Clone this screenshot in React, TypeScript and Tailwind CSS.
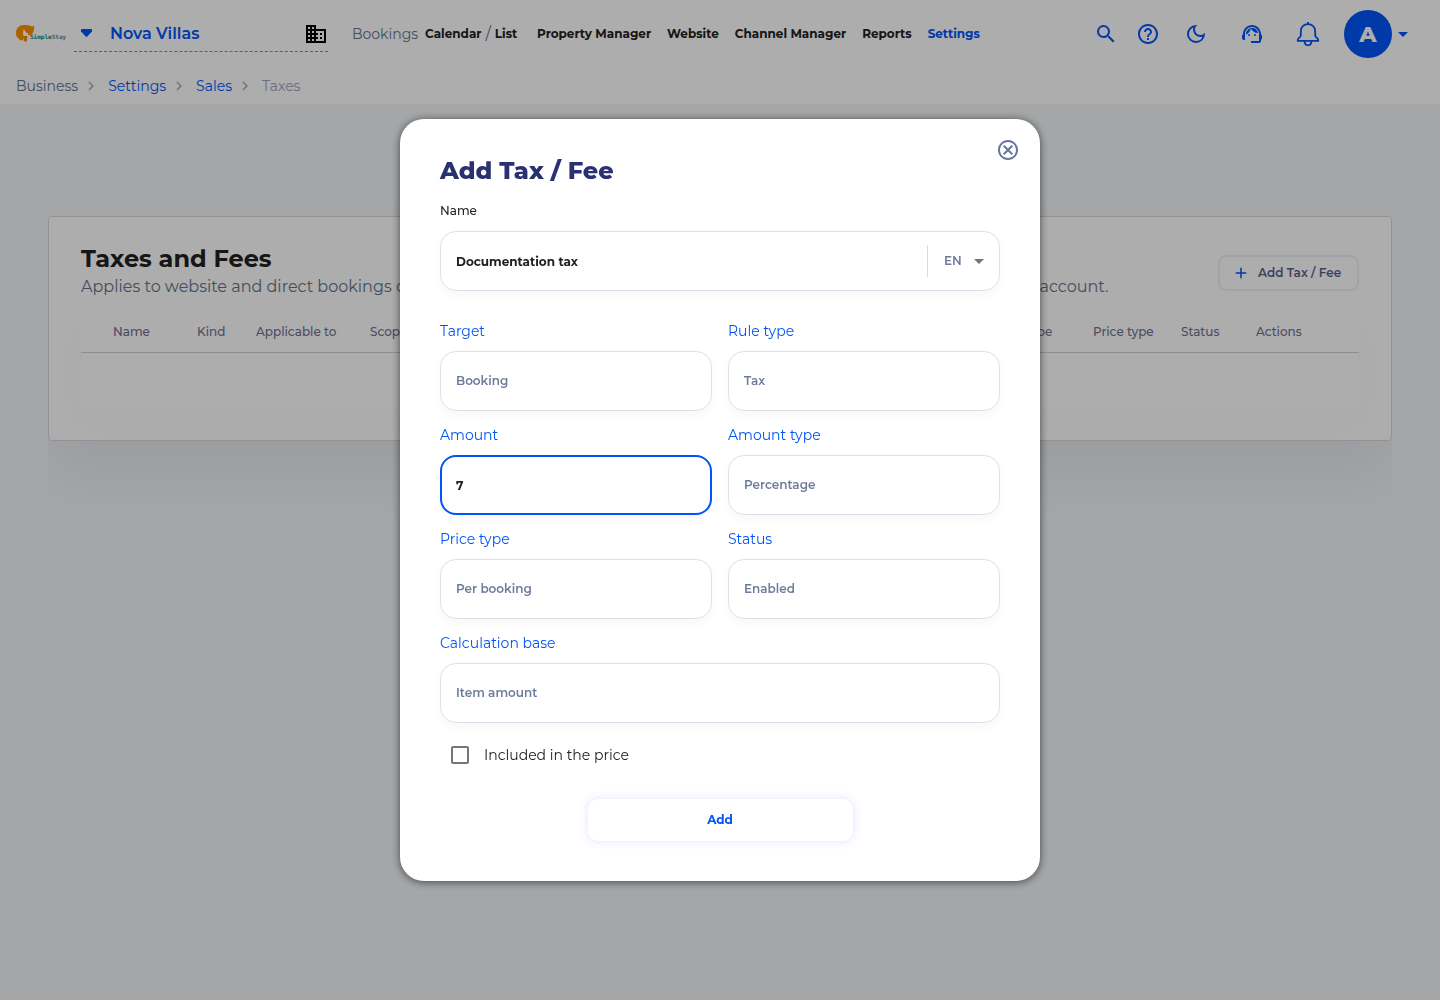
import { useState } from 'react'
import type { ReactNode } from 'react'
import {
  MdAdd,
  MdArrowDropDown,
  MdBusiness,
  MdChevronRight,
  MdHelpOutline,
  MdOutlineCancel,
  MdOutlineDarkMode,
  MdSearch,
  MdSupportAgent,
} from 'react-icons/md'

const navLinks = ['Property Manager', 'Website', 'Channel Manager', 'Reports']

const columns = [
  { title: 'Name', width: 'w-[84px]' },
  { title: 'Kind', width: 'w-[59px]' },
  { title: 'Applicable to', width: 'w-[114px]' },
  { title: 'Scope', width: 'w-[300px]' },
  { title: 'Amount', width: '' },
  { title: 'Amount type', width: 'w-[121px]' },
  { title: 'Price type', width: 'w-[88px]' },
  { title: 'Status', width: 'w-[75px]' },
  { title: 'Actions', width: 'w-[103px]' },
]

const fieldClass =
  'block w-full h-[60px] appearance-none rounded-2xl border border-[#dfdfeb] bg-white px-[15px] text-xs shadow-[0_4px_10px_rgba(20,20,43,0.03)] outline-none'

function Logo() {
  return (
    <svg width="50" height="20" viewBox="0 0 50 20" role="img" aria-label="SimpleStay">
      <path
        d="M8 1C3.300 1 0 4.300 0 8.800c0 4.600 3 7.700 7 7.700L8.200 13C6.800 11 6.600 8 7.800 5l2 3.200c1.800.4 2.400 1.600 2.400 3h2.900c2-2.200 3.600-5 2.900-9.700-1.300 1-2 1-3.200.6C13.200 1.200 11 1 8 1Z"
        fill="#ff9100"
      />
      <path d="M7.500 12h4l-.6 2.500.4 1.700-1.700 1.800-1.900-1.800.5-1.700Z" fill="#f08a00" />
      <text x="14" y="15" fontSize="6" fontWeight="700" fontFamily="DejaVu Sans Mono, monospace">
        <tspan fill="#138a78">Simple</tspan>
        <tspan fill="#6688a8">Stay</tspan>
      </text>
    </svg>
  )
}

function BellIcon() {
  return (
    <svg width="24" height="26" viewBox="0 0 24 26" fill="none" stroke="currentColor" strokeWidth="1.800">
      <path d="M12 3.200c-4.300 0-7.200 3-7.200 7v4.300c0 1.700-3 2.700-3 4.500v.8h20.400V19c0-1.800-3-2.800-3-4.500v-4.300c0-4-2.900-7-7.200-7Z" />
      <path d="M12 3.200V1M8.600 20c0 2.600 1.300 4.300 3.400 4.300s3.400-1.700 3.400-4.300" />
    </svg>
  )
}

function Header() {
  return (
    <header className="bg-white">
      <div className="flex h-[68px] items-center pl-4 pr-[25px]">
        <a href="#home" className="shrink-0">
          <Logo />
        </a>
        <button className="ml-2 flex h-9 w-[254px] shrink-0 items-center border-b border-dashed border-[#8a8a96] pl-[6px] text-left">
          <svg width="13" height="9" viewBox="0 0 13 9" className="text-[#0054f8]">
            <path
              d="M2 0h9a1 1 0 0 1 1 1v1.400L7.500 7.200a1.400 1.400 0 0 1-2 0L1 2.400V1a1 1 0 0 1 1-1Z"
              fill="currentColor"
            />
          </svg>
          <span className="ml-[17px] flex-1 text-base font-semibold text-[#0054f8]">Nova Villas</span>
          <MdBusiness size={24} className="text-black" />
        </button>

        <nav className="ml-6 flex items-center gap-4 whitespace-nowrap text-xs font-bold text-[#212121]">
          <div className="flex w-[169px] items-center">
            <span className="w-[73px] text-sm font-normal text-[#64748b]">Bookings</span>
            <a href="#calendar">Calendar</a>
            <span className="mx-1 text-base font-normal text-[#64748b]">/</span>
            <a href="#list">List</a>
          </div>
          {navLinks.map((title) => (
            <a key={title} href="#nav">
              {title}
            </a>
          ))}
          <a href="#settings" className="text-[#0054f8]">
            Settings
          </a>
        </nav>

        <div className="ml-auto flex items-center text-[#0054f8]">
          <button aria-label="Search">
            <MdSearch size={24} />
          </button>
          <button aria-label="Help" className="ml-[18px]">
            <MdHelpOutline size={24} />
          </button>
          <button aria-label="Dark mode" className="ml-6">
            <MdOutlineDarkMode size={24} />
          </button>
          <button aria-label="Support" className="ml-8">
            <MdSupportAgent size={24} />
          </button>
          <button aria-label="Notifications" className="ml-8">
            <BellIcon />
          </button>
          <button aria-label="Account" className="ml-6 flex items-center">
            <span className="flex size-12 items-center justify-center rounded-full bg-[#0054f8] text-[22px] font-extrabold text-white">
              A
            </span>
            <MdArrowDropDown size={24} className="-ml-px" />
          </button>
        </div>
      </div>

      <nav aria-label="Breadcrumb" className="px-4 text-sm">
        <ol className="flex h-9 items-center">
          <li className="flex items-center text-[#64748b]">
            Business
            <MdChevronRight size={18} className="ml-1 mr-2 text-[#a8aab8]" />
          </li>
          <li className="flex items-center">
            <a href="#settings" className="text-[#0054f8]">
              Settings
            </a>
            <MdChevronRight size={18} className="ml-1 mr-2 text-[#a8aab8]" />
          </li>
          <li className="flex items-center">
            <a href="#sales" className="text-[#0054f8]">
              Sales
            </a>
            <MdChevronRight size={18} className="ml-1 mr-2 text-[#a8aab8]" />
          </li>
          <li className="text-[#9ca3b4]">Taxes</li>
        </ol>
      </nav>
    </header>
  )
}

function TaxesCard() {
  return (
    <main className="mx-12 overflow-hidden pt-28 pb-20">
      <section className="rounded border border-[#d8d8d8] bg-white p-8 pt-6 shadow-[0_34px_60px_rgba(60,60,120,0.08)]">
        <div className="flex items-center justify-between">
          <div>
            <h1 className="text-2xl leading-9 font-bold text-[#212121]">Taxes and Fees</h1>
            <p className="text-base leading-5 whitespace-nowrap text-[#64748b]">
              Applies to website and direct bookings only. Taxes and fees for other platforms are configured in your
              channel manager account.
            </p>
          </div>
          <button className="mt-2 flex h-9 w-[141px] shrink-0 items-center rounded-lg border-2 border-[#eff0f6] pl-3 text-xs font-semibold text-[#5a5f8a]">
            <MdAdd size={18} className="mr-2 text-[#0054f8]" />
            Add Tax / Fee
          </button>
        </div>

        <table className="mt-4 w-full table-fixed text-left text-xs text-[#6e7191] shadow-[0_14px_42px_rgba(20,20,43,0.02)]">
          <thead>
            <tr className="h-[39px] border-b border-[#cfcfcf]">
              <th className="w-8" />
              {columns.map((col) => (
                <th key={col.title} className={`${col.width} font-medium whitespace-nowrap`}>
                  {col.title}
                </th>
              ))}
            </tr>
          </thead>
          <tbody>
            <tr className="h-14">
              <td colSpan={10} />
            </tr>
          </tbody>
        </table>
      </section>
    </main>
  )
}

function Field({ id, label, children }: { id: string; label: string; children: ReactNode }) {
  return (
    <div>
      <label htmlFor={id} className="mb-2 block text-sm leading-6 text-[#0054f8]">
        {label}
      </label>
      {children}
    </div>
  )
}

function SelectField({ id, label, options }: { id: string; label: string; options: string[] }) {
  return (
    <Field id={id} label={label}>
      <select id={id} className={`${fieldClass} font-semibold text-[#6e7b99]`}>
        {options.map((option) => (
          <option key={option}>{option}</option>
        ))}
      </select>
    </Field>
  )
}

function AddTaxDialog() {
  const [name, setName] = useState('Documentation tax')
  const [amount, setAmount] = useState('7')

  return (
    <div className="fixed inset-0 flex items-center justify-center overflow-auto bg-black/32">
      <form
        role="dialog"
        aria-modal="true"
        aria-labelledby="dialog-title"
        onSubmit={(e) => e.preventDefault()}
        className="relative w-full max-w-[640px] rounded-3xl bg-white px-10 pt-8 pb-10 shadow-[0_1px_8px_rgba(0,0,0,0.6)]"
      >
        <button type="button" aria-label="Close" className="absolute top-[19px] right-5 text-[#66779d]">
          <MdOutlineCancel size={24} />
        </button>

        <h2 id="dialog-title" className="text-2xl leading-10 font-extrabold text-[#2a3171]">
          Add Tax / Fee
        </h2>

        <label htmlFor="name" className="mt-2 mb-2 block text-xs leading-6 font-medium text-[#212121]">
          Name
        </label>
        <div className={`${fieldClass} flex items-center`}>
          <input
            id="name"
            value={name}
            onChange={(e) => setName(e.target.value)}
            className="h-14 min-w-0 flex-1 font-bold text-[#212121] outline-none"
          />
          <div className="relative flex h-8 items-center border-l border-[#d9dbe3]">
            <select
              aria-label="Language"
              className="w-14 appearance-none pl-4 font-semibold text-[#6e7b99] outline-none"
            >
              <option>EN</option>
              <option>ES</option>
            </select>
            <MdArrowDropDown size={24} className="pointer-events-none absolute -right-[7px] text-[#757575]" />
          </div>
        </div>

        <div className="mt-7 grid grid-cols-2 gap-x-4 gap-y-3">
          <SelectField id="target" label="Target" options={['Booking', 'Item']} />
          <SelectField id="rule-type" label="Rule type" options={['Tax', 'Fee']} />
          <Field id="amount" label="Amount">
            <input
              id="amount"
              inputMode="decimal"
              value={amount}
              onChange={(e) => setAmount(e.target.value)}
              className="block h-[60px] w-full rounded-2xl border-2 border-[#0054f8] px-[14px] text-xs font-bold text-[#212121] shadow-[0_4px_10px_rgba(20,20,43,0.03)] outline-none"
            />
          </Field>
          <SelectField id="amount-type" label="Amount type" options={['Percentage', 'Fixed']} />
          <SelectField id="price-type" label="Price type" options={['Per booking', 'Per night']} />
          <SelectField id="status" label="Status" options={['Enabled', 'Disabled']} />
          <div className="col-span-2">
            <SelectField id="base" label="Calculation base" options={['Item amount', 'Total amount']} />
          </div>
        </div>

        <div className="mt-3 flex h-10 items-center pl-[11px]">
          <input
            id="included"
            type="checkbox"
            className="size-[18px] appearance-none rounded-xs border-2 border-[#757575] checked:bg-[#0054f8]"
          />
          <label htmlFor="included" className="pl-[15px] text-sm text-[#212121]">
            Included in the price
          </label>
        </div>

        <button className="mx-auto mt-6 block h-[42px] w-[265px] rounded-[10px] bg-white text-xs font-bold text-[#0054f8] shadow-[0_0_10px_rgba(90,60,255,0.16)]">
          Add
        </button>
      </form>
    </div>
  )
}

export default function App() {
  return (
    <div className="min-h-screen bg-[#f3f5f8] font-['Montserrat','Inter',sans-serif]">
      <Header />
      <TaxesCard />
      <AddTaxDialog />
    </div>
  )
}
